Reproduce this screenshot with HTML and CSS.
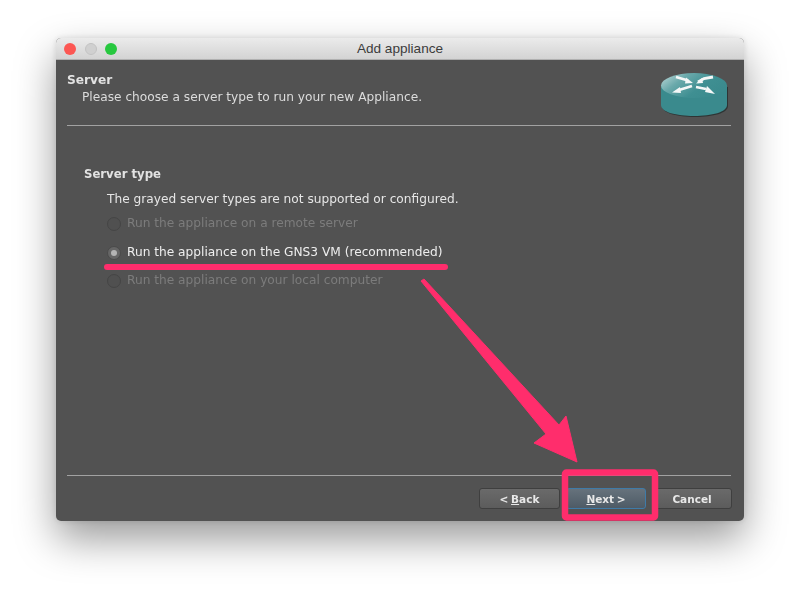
FILE: index.html
```html
<!DOCTYPE html>
<html lang="en">
<head>
<meta charset="utf-8">
<title>Add appliance</title>
<link rel="stylesheet" href="styles.css">
</head>
<body>
<main class="window">
  <header class="titlebar">
    <div class="lights">
      <span class="light red"></span>
      <span class="light gray"></span>
      <span class="light green"></span>
    </div>
    <div class="title">Add appliance</div>
  </header>
  <div class="content">
    <section class="head">
      <div class="head-text">
        <div class="head-title">Server</div>
        <div class="head-sub">Please choose a server type to run your new Appliance.</div>
      </div>
      <svg class="router" width="70" height="48" viewBox="0 0 70 48">
        <defs>
          <linearGradient id="top" x1="0" y1="0" x2="1" y2="0.5">
            <stop offset="0" stop-color="#c4dcdc"/>
            <stop offset="0.35" stop-color="#6aa9ab"/>
            <stop offset="0.7" stop-color="#3f8f92"/>
            <stop offset="1" stop-color="#3b8b8e"/>
          </linearGradient>
        </defs>
        <path d="M1 16 V35 C1 42 16 46 34 46 C52 46 67 42 67 35 V16 Z" fill="#2e3434" transform="translate(1 1)"/>
        <path d="M1 16 V35 C1 42 16 46 34 46 C52 46 67 42 67 35 V16 Z" fill="#3a8a8d"/>
        <ellipse cx="34" cy="15.500" rx="33" ry="12.500" fill="url(#top)"/>
        <path d="M16 7 L28 10.500 M38 12 L44 8.500 L53 7 M19 20 L32 16 M36 17 L46 19" fill="none" stroke="#f4f7f7" stroke-width="2.800"/>
        <path d="M26 7.500 L33 13 L25 13.500 Z M36 13.500 L42 8 L43 13 Z M12 22.500 L20 17 L21 23 Z M47 16 L55 24 L45 22 Z" fill="#f4f7f7"/>
      </svg>
    </section>
    <div class="rule"></div>
    <section class="group">
      <div class="group-title">Server type</div>
      <p class="note">The grayed server types are not supported or configured.</p>
      <div class="option disabled"><span class="radio"></span><span class="option-label">Run the appliance on a remote server</span></div>
      <div class="option"><span class="radio checked"></span><span class="option-label">Run the appliance on the GNS3 VM (recommended)</span></div>
      <div class="option disabled"><span class="radio"></span><span class="option-label">Run the appliance on your local computer</span></div>
    </section>
    <div class="rule foot-rule"></div>
    <footer class="buttons">
      <button class="btn back">&lt; <u>B</u>ack</button>
      <button class="btn next"><u>N</u>ext &gt;</button>
      <button class="btn cancel">Cancel</button>
    </footer>
  </div>
</main>
<svg class="annot" width="800" height="595" viewBox="0 0 800 595">
  <path d="M107 267 H445" stroke="#ff2d6c" stroke-width="6" stroke-linecap="round" fill="none"/>
  <path d="M421 281 L424 279 L559 425 L566 416 L577 462 L534 443 L546 434 Z" fill="#ff2d6c" stroke="#ff2d6c" stroke-width="1" stroke-linejoin="round"/>
  <rect x="565" y="472.500" width="90" height="45" rx="1.500" fill="none" stroke="#ff2d6c" stroke-width="6.500"/>
</svg>
</body>
</html>
```
FILE: styles.css
```css
* { box-sizing: border-box; }
html, body { margin: 0; padding: 0; }
body {
  width: 800px;
  height: 595px;
  overflow: hidden;
  background: #fff;
  position: relative;
  font-family: "DejaVu Sans", sans-serif;
  font-size: 12.200px;
}
.window {
  width: 688px;
  height: 483px;
  margin: 38px 0 0 56px;
  border-radius: 5px;
  overflow: hidden;
  display: flex;
  flex-direction: column;
  background: #525252;
  box-shadow: 0 18px 40px rgba(0, 0, 0, .4), 0 0 6px rgba(0, 0, 0, .12);
  filter: blur(.3px);
}
.titlebar {
  height: 22px;
  flex: none;
  position: relative;
  display: flex;
  align-items: center;
  justify-content: center;
  background: linear-gradient(#ebebeb, #d3d3d3);
  border-bottom: 1px solid #b0b0b0;
}
.lights {
  position: absolute;
  left: 8px;
  top: 5px;
  display: flex;
  gap: 8.500px;
}
.light {
  width: 12px;
  height: 12px;
  border-radius: 50%;
}
.red { background: #fc5753; }
.gray { background: #d0d0d0; border: 1px solid #c2c2c2; }
.green { background: #27c83f; }
.title {
  color: #3c3c3c;
  font-family: "Liberation Sans", sans-serif;
  font-size: 13.600px;
}
.content {
  flex: 1;
  padding: 0 13px 0 11px;
  display: flex;
  flex-direction: column;
  color: #e4e4e4;
}
.head {
  height: 65px;
  flex: none;
  display: flex;
  justify-content: space-between;
  align-items: flex-start;
}
.head-text { padding-top: 13px; }
.head-title {
  font-weight: bold;
  line-height: 15px;
  color: #e2e2e2;
}
.head-sub {
  padding-left: 15px;
  line-height: 19px;
  color: #dcdcdc;
}
.router { margin: 10px 1px 0 0; }
.rule {
  height: 1px;
  flex: none;
  background: #a2a2a2;
}
.group {
  flex: 1;
  padding: 41px 0 0 17px;
}
.group-title {
  font-weight: bold;
  font-size: 11.700px;
  line-height: 15px;
  color: #e2e2e2;
}
.note {
  margin: 10px 0 0 23px;
  line-height: 15px;
  color: #e6e6e6;
}
.option {
  height: 28.500px;
  margin-left: 23px;
  display: flex;
  align-items: center;
  gap: 6px;
  color: #eeeeee;
}
.note + .option { margin-top: 2px; }
.disabled { color: #7c7c7c; }
.radio {
  width: 14px;
  height: 14px;
  border-radius: 50%;
  border: 1px solid #454545;
  background: #505050;
  flex: none;
  position: relative;
  top: 1px;
}
.checked {
  background: #666666;
  border-color: #4a4a4a;
}
.checked::after {
  content: "";
  position: absolute;
  left: 3px;
  top: 3px;
  width: 6px;
  height: 6px;
  border-radius: 50%;
  background: #b4b4b4;
}
.buttons {
  height: 45px;
  flex: none;
  display: flex;
  justify-content: flex-end;
  gap: 6px;
  padding: 12px 0 0 0;
  margin-right: -1px;
}
.btn {
  width: 80px;
  height: 21px;
  padding: 0;
  border: 1px solid #3f3f3f;
  border-radius: 3px;
  background: linear-gradient(#6a6a6a, #5c5c5c);
  color: #e8e8e8;
  font-family: "DejaVu Sans", sans-serif;
  font-size: 10.500px;
  font-weight: bold;
  word-spacing: -1px;
}
.back { width: 81px; }
.next {
  background: linear-gradient(#66727c, #4e5b66);
  border-color: #3f7ba8;
}
.annot {
  position: absolute;
  left: 0;
  top: 0;
  filter: blur(.3px);
}
```
